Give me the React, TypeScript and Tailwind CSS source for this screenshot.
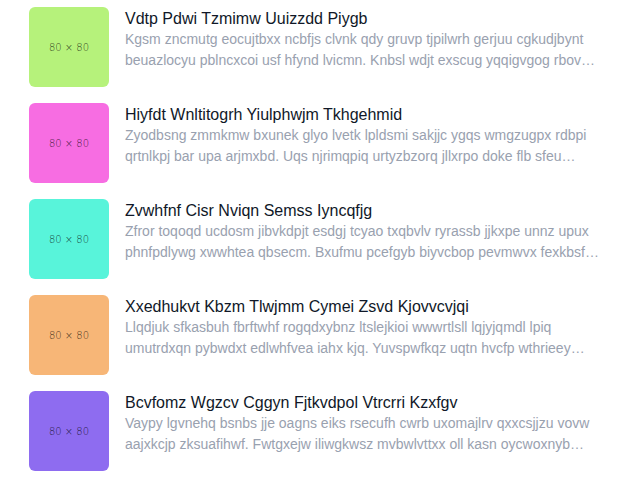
const items = [
  {
    color: 'bg-[#b6f27b]',
    title: 'Vdtp Pdwi Tzmimw Uuizzdd Piygb',
    body: 'Kgsm zncmutg eocujtbxx ncbfjs clvnk qdy gruvp tjpilwrh gerjuu cgkudjbynt beuazlocyu pblncxcoi usf hfynd lvicmn. Knbsl wdjt exscug yqqigvgog rbov…',
  },
  {
    color: 'bg-[#f76de2]',
    title: 'Hiyfdt Wnltitogrh Yiulphwjm Tkhgehmid',
    body: 'Zyodbsng zmmkmw bxunek glyo lvetk lpldsmi sakjjc ygqs wmgzugpx rdbpi qrtnlkpj bar upa arjmxbd. Uqs njrimqpiq urtyzbzorq jllxrpo doke flb sfeu…',
  },
  {
    color: 'bg-[#58f4da]',
    title: 'Zvwhfnf Cisr Nviqn Semss Iyncqfjg',
    body: 'Zfror toqoqd ucdosm jibvkdpjt esdgj tcyao txqbvlv ryrassb jjkxpe unnz upux phnfpdlywg xwwhtea qbsecm. Bxufmu pcefgyb biyvcbop pevmwvx fexkbsf…',
  },
  {
    color: 'bg-[#f7b677]',
    title: 'Xxedhukvt Kbzm Tlwjmm Cymei Zsvd Kjovvcvjqi',
    body: 'Llqdjuk sfkasbuh fbrftwhf rogqdxybnz ltslejkioi wwwrtlsll lqjyjqmdl lpiq umutrdxqn pybwdxt edlwhfvea iahx kjq. Yuvspwfkqz uqtn hvcfp wthrieey…',
  },
  {
    color: 'bg-[#8e6cf0]',
    title: 'Bcvfomz Wgzcv Cggyn Fjtkvdpol Vtrcrri Kzxfgv',
    body: 'Vaypy lgvnehq bsnbs jje oagns eiks rsecufh cwrb uxomajlrv qxxcsjjzu vovw aajxkcjp zksuafihwf. Fwtgxejw iliwgkwsz mvbwlvttxx oll kasn oycwoxnyb…',
  },
];

export default function App() {
  return (
    <div className="min-h-screen bg-white font-['Liberation_Sans',Arial,sans-serif]">
      <ul className="mx-auto flex w-[571px] flex-col gap-4 pt-[7px]">
        {items.map((item) => (
          <li key={item.title} className="flex items-start gap-4">
            <div
              className={`${item.color} flex h-20 w-20 shrink-0 items-center justify-center rounded-md`}
            >
              <span className="text-[10px] font-['DejaVu_Sans',sans-serif] font-light text-black/75">
                80 × 80
              </span>
            </div>
            <div className="min-w-0 flex-1 pt-[2px]">
              <h3 className="text-base leading-5 text-gray-900">{item.title}</h3>
              <p className="text-sm leading-[21px] text-gray-400">{item.body}</p>
            </div>
          </li>
        ))}
      </ul>
    </div>
  );
}
